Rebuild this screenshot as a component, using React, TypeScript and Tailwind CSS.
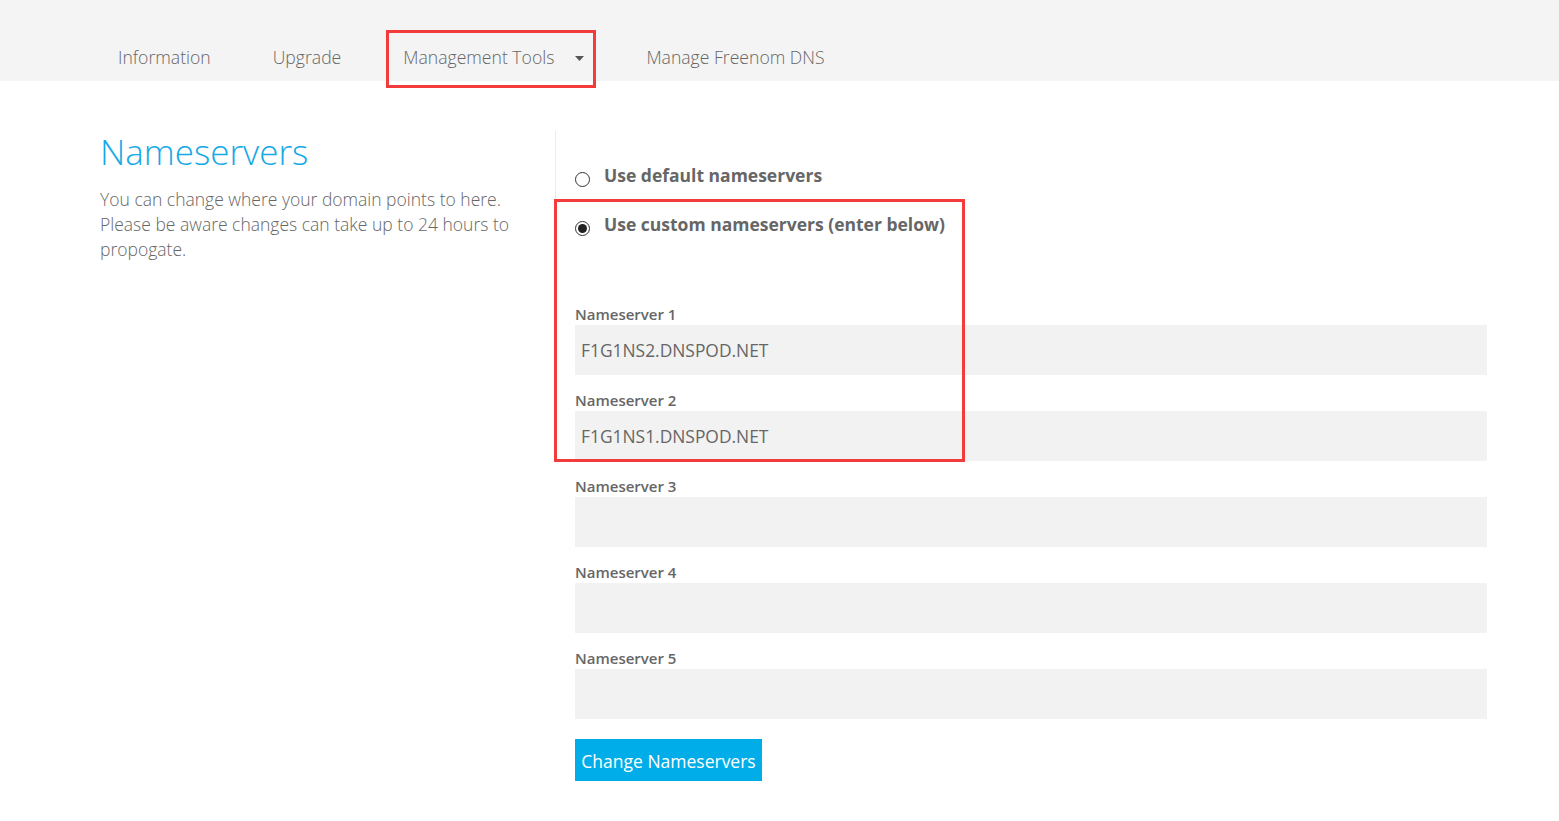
import React from 'react';

const navItems = ['Information', 'Upgrade', 'Management Tools', 'Manage Freenom DNS'];

const servers = ['F1G1NS2.DNSPOD.NET', 'F1G1NS1.DNSPOD.NET', '', '', ''];

function Radio({ checked }: { checked?: boolean }) {
  return (
    <span className="mt-[9px] flex h-[15px] w-[15px] shrink-0 items-center justify-center rounded-full border border-[#333] bg-white">
      {checked && <span className="h-[9px] w-[9px] rounded-full bg-[#222]" />}
    </span>
  );
}

export default function App() {
  return (
    <div className="relative min-h-[821px] bg-white font-['Open_Sans',sans-serif] text-[#666]">
      {/* top tabs */}
      <div className="h-[81px] bg-[#f4f4f4] pl-[87px]">
        <ul className="flex h-full items-start pt-[45px]">
          {navItems.map((item, i) => (
            <li
              key={item}
              className="flex items-center px-[31px] text-[17.6px] font-light leading-[25px] text-[#666]"
            >
              {item}
              {i === 2 && (
                <svg className="ml-[21px] mt-[2px]" width="9" height="5" viewBox="0 0 9 5">
                  <path d="M0 0h9L4.5 5z" fill="#555" />
                </svg>
              )}
            </li>
          ))}
        </ul>
      </div>

      <div className="flex pl-[100px] pr-[72px] pt-[50px]">
        <div className="w-[455px] shrink-0 pr-[40px]">
          <h1 className="text-[35px] font-light leading-[42px] text-[#15a9e6]">Nameservers</h1>
          <p className="mt-[14px] text-[17.5px] font-light leading-[25px] text-[#666]">
            You can change where your domain points to here. Please be aware changes can take up
            to 24 hours to propogate.
          </p>
        </div>

        <div className="h-[330px] w-px shrink-0 bg-[#ececec]" />

        <form className="flex-1 pl-[19px]" onSubmit={(e) => e.preventDefault()}>
          <div className="pt-[32px]">
            <label className="flex items-start gap-[14px]">
              <Radio />
              <span className="text-[17.5px] font-bold leading-[24px] text-[#666]">
                Use default nameservers
              </span>
            </label>
            <label className="mt-[25px] flex items-start gap-[14px]">
              <Radio checked />
              <span className="text-[17.5px] font-bold leading-[24px] text-[#666]">
                Use custom nameservers (enter below)
              </span>
            </label>
          </div>

          <div className="mt-[68px]">
            {servers.map((value, i) => (
              <div key={i} className="mb-[15px]">
                <div className="text-[15px] font-semibold leading-[20px] text-[#666]">
                  Nameserver {i + 1}
                </div>
                <div className="mt-px flex h-[50px] items-center bg-[#f2f2f2] px-[6px] text-[17.4px] text-[#666]">
                  {value}
                </div>
              </div>
            ))}
          </div>

          <button
            type="submit"
            className="mt-[5px] h-[42px] w-[187px] bg-[#00ade9] pt-[2px] text-[17.5px] text-white"
          >
            Change Nameservers
          </button>
        </form>
      </div>

      {/* annotation boxes */}
      <div className="pointer-events-none absolute left-[386px] top-[30px] h-[58px] w-[210px] border-[3px] border-[#f33b3b]" />
      <div className="pointer-events-none absolute left-[554px] top-[199px] h-[263px] w-[411px] border-[3px] border-[#f33b3b]" />
    </div>
  );
}
